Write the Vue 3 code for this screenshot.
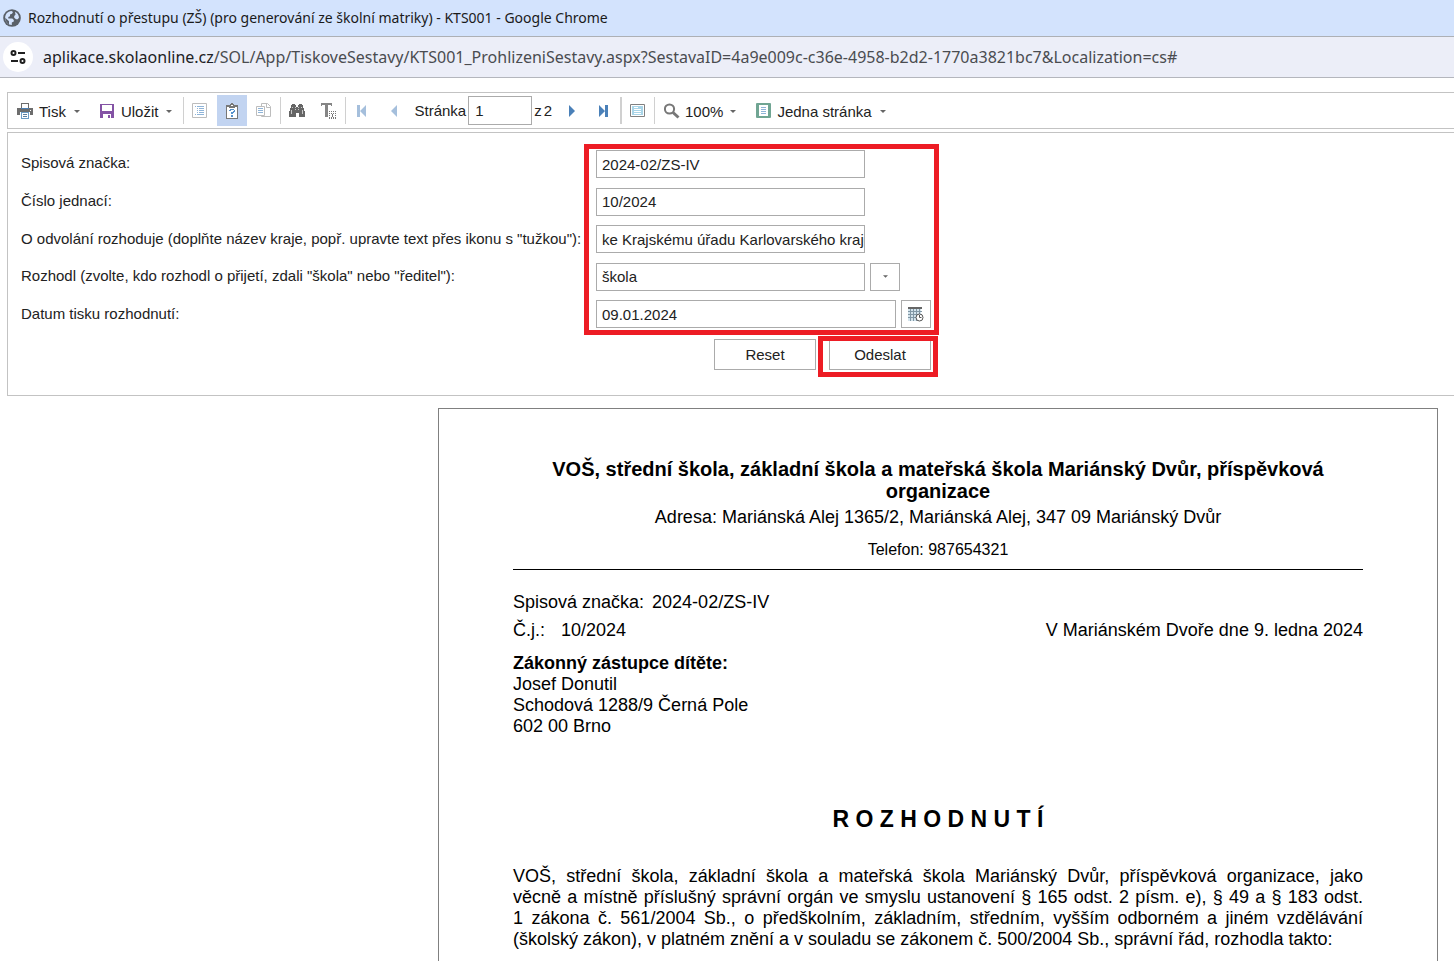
<script setup>
import { ref } from 'vue'

const page = ref('1')
const fileNumber = ref('2024-02/ZS-IV')
const refNumber = ref('10/2024')
const appeal = ref('ke Krajskému úřadu Karlovarského kraje')
const decidedBy = ref('škola')
const printDate = ref('09.01.2024')
</script>

<template>
  <div class="window">
    <header class="titlebar">
      <svg class="globe" width="18" height="18" viewBox="0 0 18 18" aria-hidden="true">
        <circle cx="9" cy="9" r="8.8" fill="#5a6068" />
        <path d="M2.200 9.500C1.800 5.500 4.500 2.300 8.500 2l1.500 1-1 1.800-2 .7v1.700L5.300 8v1.500h4l1.500 1.500v1.500l-2 1v2.500C5 16 2.500 13 2.200 9.500z" fill="#d3e3fd" />
        <path d="M12 2.800c2.300 1.100 3.800 3.200 4 5.700l-1.200 1.800h-1.800l-1.800-1.600V7l1.300-1.200z" fill="#d3e3fd" />
        <path d="M2.200 8.800l3.800 3.400v3.300C3.800 14.300 2.300 12 2.200 8.800z" fill="#5a6068" />
      </svg>
      <h1>Rozhodnutí o přestupu (ZŠ) (pro generování ze školní matriky) - KTS001 - Google Chrome</h1>
    </header>

    <div class="addressbar">
      <button class="site" type="button" aria-label="Informace o webu">
        <svg width="16" height="16" viewBox="0 0 16 16" fill="none" stroke="#1f1f1f" stroke-width="2">
          <circle cx="3.500" cy="4" r="2" />
          <path d="M8 4h7M1 12h7" />
          <circle cx="12.500" cy="12" r="2" />
        </svg>
      </button>
      <p class="url"><span class="host">aplikace.skolaonline.cz</span>/SOL/App/TiskoveSestavy/KTS001_ProhlizeniSestavy.aspx?SestavaID=4a9e009c-c36e-4958-b2d2-1770a3821bc7&amp;Localization=cs#</p>
    </div>

    <main class="viewer">
      <div class="toolbar" role="toolbar">
        <button class="menu" type="button">
          <svg width="16" height="16" viewBox="0 0 16 16" shape-rendering="crispEdges">
            <path d="M0 5h16v7H0z" fill="#6d6d6d" />
            <path d="M4 0h8v5H4z" fill="#6d6d6d" /><path d="M5 1h6v4H5z" fill="#fff" />
            <path d="M4 5h8v1H4z" fill="#4a7fb5" />
            <path d="M3 9h10v3H3z" fill="#fff" />
            <path d="M4 9h8v7H4z" fill="#6d9cc6" /><path d="M5 10h6v5H5z" fill="#fff" />
            <path d="M6 11h4v1H6zM6 13h4v1H6z" fill="#5f7f9f" />
            <path d="M13 7h1v1h-1z" fill="#fff" />
          </svg>
          <span>Tisk</span>
          <svg class="caret" width="6" height="3" viewBox="0 0 6 3"><path d="M0 0h6L3 3z" /></svg>
        </button>
        <button class="menu" type="button">
          <svg width="16" height="16" viewBox="0 0 16 16" shape-rendering="crispEdges">
            <path d="M1 1h14v14H1z" fill="#8453a5" />
            <path d="M3 2h10v6H3z" fill="#fff" />
            <path d="M4 11h8v4H4z" fill="#fff" />
            <path d="M9 12h2v3H9z" fill="#8453a5" />
          </svg>
          <span>Uložit</span>
          <svg class="caret" width="6" height="3" viewBox="0 0 6 3"><path d="M0 0h6L3 3z" /></svg>
        </button>
        <i class="sep"></i>
        <button class="tool" type="button" aria-label="Osnova dokumentu">
          <svg width="16" height="16" viewBox="0 0 16 16">
            <path d="M.5.500h14v14H.5z" fill="#fff" stroke="#bdbdbd" />
            <path d="M3 3h1v1H3zM5 3h7v1H5zM5 5h1v1H5zM7 5h5v1H7zM5 7h1v1H5zM7 7h5v1H7zM5 9h1v1H5zM7 9h5v1H7zM3 11h1v1H3zM5 11h7v1H5z" fill="#8fb4d8" />
          </svg>
        </button>
        <button class="tool active" type="button" aria-label="Parametry">
          <svg width="16" height="16" viewBox="0 0 16 16" shape-rendering="crispEdges">
            <path d="M2 2h12v14H2z" fill="#777" /><path d="M3 4h10v11H3z" fill="#fff" />
            <path d="M5 2h6v3H5zM7 0h2v2H7zM6 1h4v1H6z" fill="#777" />
            <path d="M7 2h2v1H7z" fill="#fff" />
            <path d="M6 6h4v1h1v2h-1v1H9v1H7V9h2V8h1V7H7v1H5V7h1zM7 12h2v2H7z" fill="#5792cb" />
          </svg>
        </button>
        <button class="tool" type="button" aria-label="Kopírovat">
          <svg width="16" height="16" viewBox="0 0 16 16">
            <path d="M5.500.500h6l3 3v10h-9z" fill="#fff" stroke="#bdbdbd" />
            <path d="M10.500.500v4h4" fill="none" stroke="#bdbdbd" />
            <path d="M.5 3.500h8v9h-8z" fill="#fff" stroke="#bdbdbd" />
            <path d="M2 5h5v1H2zM2 7h5v1H2zM2 9h5v1H2z" fill="#8fb4d8" />
          </svg>
        </button>
        <i class="sep"></i>
        <button class="tool" type="button" aria-label="Hledat">
          <svg width="16" height="16" viewBox="0 0 16 16" shape-rendering="crispEdges">
            <path d="M3 1h3v1h1v2h2V2h1V1h3v1h1v3h1v3h1v6h-6v-4H7v4H0V8h1V5h1V2h1z" fill="#666" />
            <path d="M3 4h1v1H3zM6 4h1v1H6zM9 4h1v1H9zM12 4h1v1h-1zM2 7h1v4H2zM13 7h1v4h-1zM6 6h1v1H6zM9 6h1v1H9z" fill="#c7c7c7" />
          </svg>
        </button>
        <button class="tool" type="button" aria-label="Výběr textu">
          <svg width="16" height="16" viewBox="0 0 16 16">
            <path d="M0 0h11v3h-1V2H7v12H4V2H1v1H0z" fill="#858585" />
            <path d="M8 8.500h7M8 15.500h7M8.500 8v7M14.500 8v8" fill="none" stroke="#777" stroke-dasharray="1 1" />
            <path d="M10 10h1v1h1v-1h1v1h-1v3h1v1h-1v-1h-1v1h-1v-1h1v-3h-1z" fill="#777" />
          </svg>
        </button>
        <i class="sep"></i>
        <button class="tool muted" type="button" aria-label="První stránka">
          <svg width="10" height="12" viewBox="0 0 10 12"><path d="M0 0h3v12H0zM9 0v12L3 6z" /></svg>
        </button>
        <button class="tool muted" type="button" aria-label="Předchozí stránka">
          <svg width="6" height="12" viewBox="0 0 6 12"><path d="M6 0v12L0 6z" /></svg>
        </button>
        <div class="pager">
          <label for="page">Stránka</label>
          <input id="page" v-model="page" type="text" />
          <span>z</span><span>2</span>
        </div>
        <button class="tool nav" type="button" aria-label="Další stránka">
          <svg width="6" height="12" viewBox="0 0 6 12"><path d="M0 0v12l6-6z" /></svg>
        </button>
        <button class="tool nav" type="button" aria-label="Poslední stránka">
          <svg width="10" height="12" viewBox="0 0 10 12"><path d="M6 0h3v12H6zM0 0v12l6-6z" /></svg>
        </button>
        <i class="sep wide"></i>
        <button class="tool" type="button" aria-label="Náhled tisku">
          <svg width="16" height="14" viewBox="0 0 16 14">
            <path d="M.5.500h14v12H.5z" fill="#fff" stroke="#808080" />
            <path d="M2 2h11v9H2z" fill="#a9d5e8" />
            <path d="M4 3h4v1H4zM4 5h7v1H4zM4 7h7v1H4zM4 9h7v1H4z" fill="#fff" />
          </svg>
        </button>
        <i class="sep"></i>
        <button class="menu zoom" type="button">
          <svg width="16" height="16" viewBox="0 0 16 16" fill="none" stroke="#777">
            <circle cx="5.500" cy="6" r="4.600" stroke-width="2" />
            <path d="M9 9.500l5.500 5" stroke-width="3" />
          </svg>
          <span>100%</span>
          <svg class="caret" width="6" height="3" viewBox="0 0 6 3"><path d="M0 0h6L3 3z" /></svg>
        </button>
        <button class="menu" type="button">
          <svg width="16" height="16" viewBox="0 0 16 16">
            <rect x="1" y="0" width="15" height="15" rx="1" fill="#70a593" />
            <path d="M4 2h9v11H4z" fill="#fff" />
            <path d="M6 4h5v1H6zM6 6h5v1H6zM6 8h5v1H6zM6 10h5v1H6z" fill="#8fb4d8" />
          </svg>
          <span>Jedna stránka</span>
          <svg class="caret" width="6" height="3" viewBox="0 0 6 3"><path d="M0 0h6L3 3z" /></svg>
        </button>
      </div>

      <form class="params" @submit.prevent>
        <div class="columns">
          <div class="labels">
            <label for="fileNumber">Spisová značka:</label>
            <label for="refNumber">Číslo jednací:</label>
            <label for="appeal">O odvolání rozhoduje (doplňte název kraje, popř. upravte text přes ikonu s "tužkou"):</label>
            <label for="decidedBy">Rozhodl (zvolte, kdo rozhodl o přijetí, zdali "škola" nebo "ředitel"):</label>
            <label for="printDate">Datum tisku rozhodnutí:</label>
          </div>
          <div class="fields marked">
            <div class="field"><input id="fileNumber" v-model="fileNumber" type="text" /></div>
            <div class="field"><input id="refNumber" v-model="refNumber" type="text" /></div>
            <div class="field"><input id="appeal" v-model="appeal" type="text" /></div>
            <div class="field">
              <input id="decidedBy" v-model="decidedBy" type="text" />
              <button type="button" aria-label="Otevřít nabídku">
                <svg class="caret" width="5" height="3" viewBox="0 0 6 3"><path d="M0 0h6L3 3z" /></svg>
              </button>
            </div>
            <div class="field">
              <input id="printDate" v-model="printDate" class="long" type="text" />
              <button type="button" aria-label="Vybrat datum">
                <svg width="16" height="16" viewBox="0 0 16 16">
                  <g shape-rendering="crispEdges">
                    <path d="M0 3h13v12H0z" fill="#d3e3ec" />
                    <path d="M0 1h14v2H0z" fill="#666" />
                    <path d="M2 3h1v12H2zM5 3h1v12H5zM8 3h1v12H8zM11 3h1v12h-1zM0 5h14v1H0zM0 8h14v1H0zM0 11h14v1H0z" fill="#8197a5" />
                  </g>
                  <circle cx="11.500" cy="11.500" r="3.500" fill="#fff" stroke="#555" />
                  <path d="M11.500 9v2.500h2" fill="none" stroke="#555" />
                </svg>
              </button>
            </div>
          </div>
        </div>
        <div class="actions">
          <button class="reset" type="button">Reset</button>
          <span class="marked submit"><button type="submit">Odeslat</button></span>
        </div>
      </form>

      <article class="paper">
        <header>
          <h2>VOŠ, střední škola, základní škola a mateřská škola Mariánský Dvůr, příspěvková organizace</h2>
          <p class="address">Adresa: Mariánská Alej 1365/2, Mariánská Alej, 347 09 Mariánský Dvůr</p>
          <p class="phone">Telefon: 987654321</p>
        </header>
        <div class="meta"><span>Spisová značka:</span><span>2024-02/ZS-IV</span></div>
        <div class="meta">
          <span class="cj">Č.j.:</span><span>10/2024</span>
          <span class="place">V Mariánském Dvoře dne 9. ledna 2024</span>
        </div>
        <address>
          <strong>Zákonný zástupce dítěte:</strong>
          <span>Josef Donutil</span>
          <span>Schodová 1288/9 Černá Pole</span>
          <span>602 00 Brno</span>
        </address>
        <h3>R O Z H O D N U T Í</h3>
        <p class="body">
          <span>VOŠ, střední škola, základní škola a mateřská škola Mariánský Dvůr, příspěvková organizace, jako</span>
          <span>věcně a místně příslušný správní orgán ve smyslu ustanovení § 165 odst. 2 písm. e), § 49 a § 183 odst.</span>
          <span>1 zákona č. 561/2004 Sb., o předškolním, základním, středním, vyšším odborném a jiném vzdělávání</span>
          <span>(školský zákon), v platném znění a v souladu se zákonem č. 500/2004 Sb., správní řád, rozhodla takto:</span>
        </p>
      </article>
    </main>
  </div>
</template>

<style>
body {
  margin: 0;
  background: #fff;
}
</style>

<style scoped>
.window {
  height: 100vh;
  display: flex;
  flex-direction: column;
  overflow: hidden;
  font-family: "Liberation Sans", Arial, sans-serif;
  font-size: 15px;
  color: #222;
}
h1, h2, h3, p { margin: 0; }
button, input {
  box-sizing: border-box;
  font: inherit;
  color: inherit;
  background: #fff;
  border: 1px solid #ababab;
  border-radius: 0;
  padding: 0;
}
svg { display: block; flex: none; }

.titlebar {
  display: flex;
  align-items: center;
  gap: 7px;
  height: 36px;
  flex: none;
  padding-left: 3px;
  background: #d3e3fd;
  border-bottom: 1px solid #adb0b5;
}
.titlebar h1 {
  font: 400 14px/20px "Noto Sans", "Open Sans", sans-serif;
  color: #1a1a1a;
  white-space: nowrap;
}
.addressbar {
  display: flex;
  align-items: center;
  gap: 10px;
  height: 40px;
  flex: none;
  padding-left: 3px;
  background: #eceef8;
  border-bottom: 1px solid #b4b6bd;
}
.site {
  display: grid;
  place-items: center;
  width: 30px;
  height: 30px;
  border: 0;
  border-radius: 50%;
}
.url {
  font: 400 16px/24px "Noto Sans", "Open Sans", sans-serif;
  color: #4a4c50;
  white-space: nowrap;
}
.host { color: #202124; }

.viewer {
  flex: none;
  padding: 14px 0 0 7px;
}
.toolbar {
  display: flex;
  align-items: center;
  height: 35px;
  border: 1px solid #c3c3c3;
  border-right: 0;
  white-space: nowrap;
}
.menu, .tool {
  display: flex;
  align-items: center;
  justify-content: center;
  height: 31px;
  margin: 0 1px;
  border: 0;
  flex: none;
}
.menu {
  gap: 6px;
  padding: 2px 9px 0 8px;
}
.menu.zoom { gap: 5px; }
.menu svg:first-child { margin-bottom: 2px; }
.menu .caret { margin-left: 2px; }
.caret { fill: #666; }
.tool { width: 30px; }
.tool.active, .tool.active svg { background: #c2d4f1; }
.muted { fill: #a5bfdc; }
.nav { fill: #4a80b8; }
.sep {
  width: 1px;
  height: 27px;
  background: #d0d0d0;
  flex: none;
}
.sep.wide { width: 2px; }
.menu + .sep { margin-left: 1px; }
.pager {
  display: flex;
  align-items: center;
  gap: 2px;
  padding: 0 4px;
}
.pager input {
  width: 64px;
  height: 29px;
  padding: 0 6px;
}

.params {
  height: 262px;
  margin-top: 3px;
  border: 1px solid #c3c3c3;
  border-right: 0;
}
.columns {
  display: flex;
  padding: 11px 0 0 13px;
}
.labels, .fields {
  display: flex;
  flex-direction: column;
  justify-content: space-between;
}
.labels {
  width: 563px;
  padding: 5px 0 7px;
  white-space: nowrap;
}
.labels label { line-height: 28px; }
.marked { border: 5px solid #ed1c24; }
.fields {
  height: 178px;
  padding: 1px 3px 2px 7px;
}
.field {
  display: flex;
  gap: 5px;
}
.field input {
  width: 269px;
  height: 28px;
  padding: 0 0 0 5px;
}
.field .long { width: 300px; }
.field button {
  display: grid;
  place-items: center;
  width: 30px;
  height: 28px;
}
.actions {
  display: flex;
  align-items: flex-start;
  gap: 2px;
  padding: 1px 0 0 706px;
}
.actions button {
  width: 102px;
  height: 31px;
}
.actions .reset { margin-top: 3px; }
.submit {
  display: flex;
  padding: 0 2px 2px 6px;
}
.actions .submit button {
  height: 29px;
  padding-bottom: 1px;
  border-top: 0;
}

.paper {
  box-sizing: border-box;
  max-width: 1000px;
  min-height: 700px;
  margin: 12px 16px 0 auto;
  padding: 49px 74px;
  border: 1px solid #808080;
  font-size: 18px;
  line-height: 21px;
  color: #000;
}
.paper header {
  text-align: center;
  border-bottom: 1px solid #000;
}
.paper h2 {
  font-size: 20px;
  line-height: 22px;
}
.address { padding-top: 5px; }
.phone {
  padding: 11px 0 9px;
  font-size: 16px;
}
.meta {
  display: flex;
  gap: 8px;
  padding-top: 7px;
}
header + .meta { padding-top: 22px; }
.cj { margin-right: 8px; }
.place { margin-left: auto; }
address {
  display: flex;
  flex-direction: column;
  padding-top: 12px;
  font-style: normal;
}
.paper h3 {
  padding: 68px 0 33px;
  font-size: 23px;
  line-height: 28px;
  text-align: center;
}
.body {
  text-align: justify;
  text-align-last: justify;
}
.body span { display: block; }
.body span:last-child { text-align-last: left; }
</style>
